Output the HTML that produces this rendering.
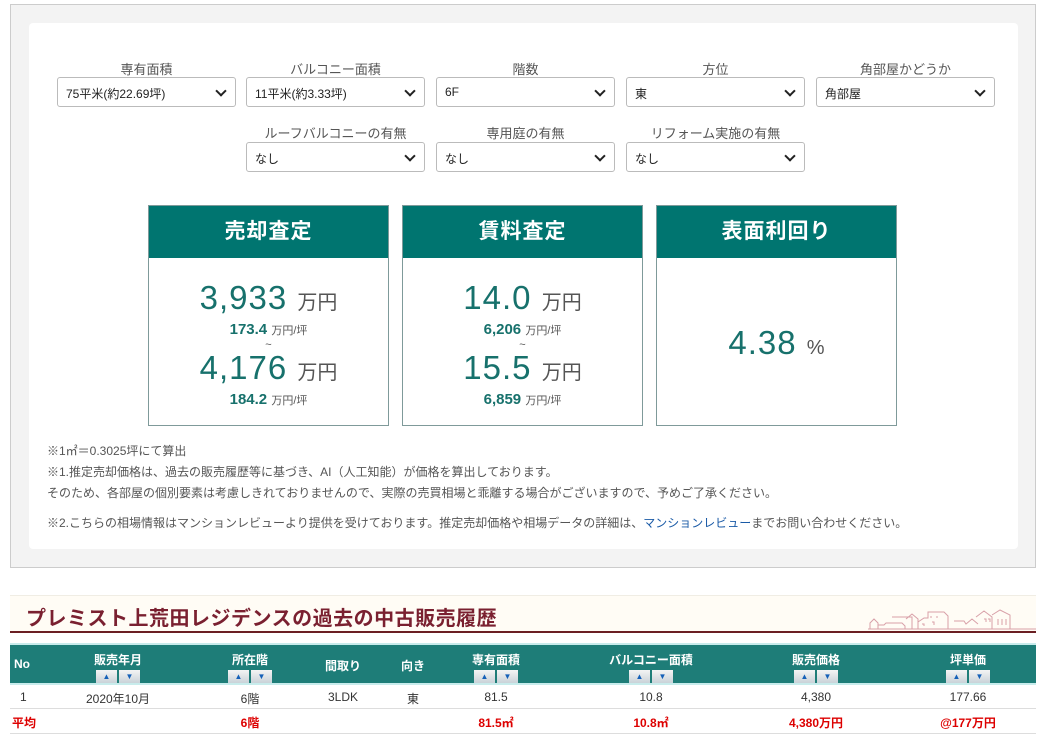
<!DOCTYPE html>
<html><head><meta charset="utf-8"><style>
*{box-sizing:border-box;margin:0;padding:0}
body{width:1047px;height:747px;background:#fff;font-family:"Liberation Sans","Noto Sans CJK JP",sans-serif;position:relative;overflow:hidden;color:#333}
.abs{position:absolute}
.outer{left:10px;top:4px;width:1026px;height:564px;background:#f3f3f3;border:1px solid #ccc}
.inner{left:29px;top:23px;width:989px;height:526px;background:#fff;border-radius:4px}
.lbl{font-size:13px;color:#555;text-align:center;width:179px}
.sel{width:179px;height:30px;border:1px solid #bbb;border-radius:3px;background:#fff;font-size:12px;color:#222;padding:7px 8px}
.sel:after{content:"";position:absolute;right:10px;top:9px;width:6px;height:6px;border-right:2px solid #222;border-bottom:2px solid #222;transform:rotate(45deg)}
.card{top:205px;width:241px;height:221px;border:1px solid #7f9a9a;background:#fff;text-align:center}
.card .h{height:52px;background:#007570;color:#fff;font-weight:bold;font-size:21px;line-height:52px;letter-spacing:1px}
.big{color:#17716c;font-size:33px;line-height:36px;letter-spacing:1px}
.big span{font-size:20px;color:#555;letter-spacing:0}
.sm{color:#17716c;font-weight:bold;font-size:15px;line-height:17px}
.sm span{font-size:11px;color:#555;font-weight:normal}
.note{left:47px;font-size:12px;color:#555}
th,td{font-size:12px}
.hdr{left:10px;top:645px;width:1026px;height:38px;background:#1e7d78}
.hc{color:#fff;font-weight:bold;font-size:12px;text-align:center;top:651px}
.btns{display:flex;gap:2px;justify-content:center;margin-top:2px}
.btns i{display:block;width:21px;height:13px;background:linear-gradient(#f4f4f4,#c9d2d8);color:#1560b8;font-size:8px;font-style:normal;line-height:13px}
.r{font-size:12px;text-align:center;top:690px;color:#333}
.a{font-size:12px;text-align:center;top:714px;color:#d00;font-weight:bold}
</style></head><body>
<div class="abs outer"></div>
<div class="abs inner"></div>

<div class="abs lbl" style="left:57px;top:59px">専有面積</div>
<div class="abs lbl" style="left:246px;top:59px">バルコニー面積</div>
<div class="abs lbl" style="left:436px;top:59px">階数</div>
<div class="abs lbl" style="left:626px;top:59px">方位</div>
<div class="abs lbl" style="left:816px;top:59px">角部屋かどうか</div>
<div class="abs sel" style="left:57px;top:77px">75平米(約22.69坪)</div>
<div class="abs sel" style="left:246px;top:77px">11平米(約3.33坪)</div>
<div class="abs sel" style="left:436px;top:77px">6F</div>
<div class="abs sel" style="left:626px;top:77px">東</div>
<div class="abs sel" style="left:816px;top:77px">角部屋</div>
<div class="abs lbl" style="left:246px;top:123px">ルーフバルコニーの有無</div>
<div class="abs lbl" style="left:436px;top:123px">専用庭の有無</div>
<div class="abs lbl" style="left:626px;top:123px">リフォーム実施の有無</div>
<div class="abs sel" style="left:246px;top:142px">なし</div>
<div class="abs sel" style="left:436px;top:142px">なし</div>
<div class="abs sel" style="left:626px;top:142px">なし</div>

<div class="abs card" style="left:148px"><div class="h">売却査定</div>
<div class="big" style="margin-top:22px">3,933 <span>万円</span></div>
<div class="sm">173.4 <span>万円/坪</span></div>
<div style="font-size:11px;line-height:10px;color:#555">~</div>
<div class="big">4,176 <span>万円</span></div>
<div class="sm">184.2 <span>万円/坪</span></div></div>
<div class="abs card" style="left:402px"><div class="h">賃料査定</div>
<div class="big" style="margin-top:22px">14.0 <span>万円</span></div>
<div class="sm">6,206 <span>万円/坪</span></div>
<div style="font-size:11px;line-height:10px;color:#555">~</div>
<div class="big">15.5 <span>万円</span></div>
<div class="sm">6,859 <span>万円/坪</span></div></div>
<div class="abs card" style="left:656px"><div class="h">表面利回り</div>
<div class="big" style="margin-top:67px">4.38 <span>%</span></div></div>

<div class="abs note" style="top:442px">※1㎡＝0.3025坪にて算出</div>
<div class="abs note" style="top:463px">※1.推定売却価格は、過去の販売履歴等に基づき、AI（人工知能）が価格を算出しております。</div>
<div class="abs note" style="top:484px">そのため、各部屋の個別要素は考慮しきれておりませんので、実際の売買相場と乖離する場合がございますので、予めご了承ください。</div>
<div class="abs note" style="top:514px">※2.こちらの相場情報はマンションレビューより提供を受けております。推定売却価格や相場データの詳細は、<span style="color:#1a5aa6">マンションレビュー</span>までお問い合わせください。</div>

<div class="abs" style="left:10px;top:595px;width:1026px;height:38px;background:#fffcf5;border-top:1px solid #f0ede4;border-bottom:2px solid #6b1f23"></div>
<div class="abs" style="left:26px;top:602px;font-size:20px;font-weight:bold;color:#7a2030;letter-spacing:0.5px">プレミスト上荒田レジデンスの過去の中古販売履歴</div>
<svg class="abs" style="left:866px;top:607px" width="170" height="24" viewBox="0 0 170 24" fill="none" stroke="#d8a0a8" stroke-width="1">
<path d="M2 22h168M4 22v-6l4-4 4 4v6M12 18h6l2-2h16l3 3v3M26 10h20v12M40 12l6-5 6 5v10M52 15l6-4h4v-6h16l4 4v13M88 14h10l2 3 6-5 6 5M110 10l8-6 8 6v12M126 8l8-5 10 5v14"/>
<path d="M30 16h3M56 17h2v2M64 10h2M70 10h2M66 15h2v3M118 12h2v3M122 12h2v3M132 12v6M136 12v6M140 12v6"/>
</svg>
<div class="abs" style="left:10px;top:643px;width:1026px;height:2px;background:#c8ecec"></div>
<div class="abs hdr"></div>
<div class="abs hc" style="left:14px;top:657px">No</div>
<div class="abs hc" style="left:78px;width:80px">販売年月<div class="btns"><i>▲</i><i>▼</i></div></div>
<div class="abs hc" style="left:210px;width:80px">所在階<div class="btns"><i>▲</i><i>▼</i></div></div>
<div class="abs hc" style="left:313px;width:60px;top:657px">間取り</div>
<div class="abs hc" style="left:393px;width:40px;top:657px">向き</div>
<div class="abs hc" style="left:456px;width:80px">専有面積<div class="btns"><i>▲</i><i>▼</i></div></div>
<div class="abs hc" style="left:601px;width:100px">バルコニー面積<div class="btns"><i>▲</i><i>▼</i></div></div>
<div class="abs hc" style="left:776px;width:80px">販売価格<div class="btns"><i>▲</i><i>▼</i></div></div>
<div class="abs hc" style="left:928px;width:80px">坪単価<div class="btns"><i>▲</i><i>▼</i></div></div>
<div class="abs" style="left:10px;top:683px;width:1026px;height:2px;background:#c8ecec"></div>

<div class="abs r" style="left:20px">1</div>
<div class="abs r" style="left:68px;width:100px">2020年10月</div>
<div class="abs r" style="left:210px;width:80px">6階</div>
<div class="abs r" style="left:313px;width:60px">3LDK</div>
<div class="abs r" style="left:393px;width:40px">東</div>
<div class="abs r" style="left:456px;width:80px">81.5</div>
<div class="abs r" style="left:601px;width:100px">10.8</div>
<div class="abs r" style="left:776px;width:80px">4,380</div>
<div class="abs r" style="left:928px;width:80px">177.66</div>
<div class="abs" style="left:10px;top:708px;width:1026px;height:1px;background:#ddd"></div>
<div class="abs a" style="left:12px">平均</div>
<div class="abs a" style="left:210px;width:80px">6階</div>
<div class="abs a" style="left:456px;width:80px">81.5㎡</div>
<div class="abs a" style="left:601px;width:100px">10.8㎡</div>
<div class="abs a" style="left:776px;width:80px">4,380万円</div>
<div class="abs a" style="left:928px;width:80px">@177万円</div>
<div class="abs" style="left:10px;top:733px;width:1026px;height:1px;background:#ddd"></div>
</body></html>
